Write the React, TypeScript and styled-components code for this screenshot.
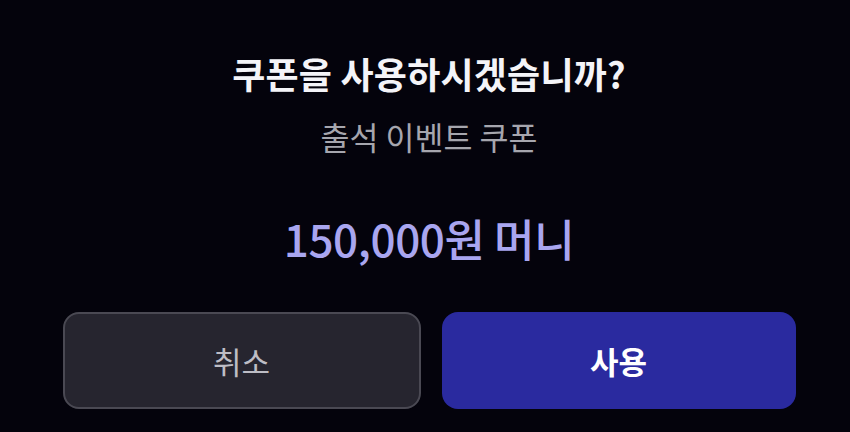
import React from "react";
import styled, { createGlobalStyle } from "styled-components";

const GlobalStyle = createGlobalStyle`
  html, body {
    margin: 0;
    padding: 0;
    background: #04030c;
  }
  body {
    font-family: "Noto Sans CJK KR", "Noto Sans", sans-serif;
  }
`;

const Sheet = styled.div`
  width: 850px;
  height: 432px;
  box-sizing: border-box;
  background: #04030c;
  display: flex;
  flex-direction: column;
  align-items: center;
  padding: 49px 0 0 8px;
`;

const Title = styled.h2`
  margin: 0;
  font-size: 36px;
  font-weight: 700;
  line-height: 48px;
  color: #f4f4f8;
  letter-spacing: 0.2px;
`;

const Subtitle = styled.p`
  margin: 19px 0 0;
  font-size: 31.5px;
  font-weight: 400;
  line-height: 40px;
  color: #a6a6ae;
`;

const Amount = styled.div`
  margin-top: 54px;
  font-size: 44px;
  font-weight: 500;
  line-height: 56px;
  color: #a9a6f0;
  letter-spacing: -0.4px;
`;

const ButtonRow = styled.div`
  margin-top: 46px;
  width: 733px;
  display: grid;
  grid-template-columns: 358px 354px;
  column-gap: 21px;
`;

const ActionButton = styled.button<{ $primary?: boolean }>`
  height: 97px;
  border-radius: 16px;
  box-sizing: border-box;
  font-family: inherit;
  font-size: 31px;
  font-weight: ${(p) => (p.$primary ? 700 : 400)};
  color: ${(p) => (p.$primary ? "#ffffff" : "#bdbdc5")};
  background: ${(p) => (p.$primary ? "#2a2a9f" : "#26252f")};
  border: ${(p) => (p.$primary ? "none" : "2px solid #4a4953")};
  display: flex;
  align-items: center;
  justify-content: center;
  cursor: pointer;
`;

export default function App() {
  return (
    <>
      <GlobalStyle />
      <Sheet>
        <Title>쿠폰을 사용하시겠습니까?</Title>
        <Subtitle>출석 이벤트 쿠폰</Subtitle>
        <Amount>150,000원 머니</Amount>
        <ButtonRow>
          <ActionButton>취소</ActionButton>
          <ActionButton $primary>사용</ActionButton>
        </ButtonRow>
      </Sheet>
    </>
  );
}
